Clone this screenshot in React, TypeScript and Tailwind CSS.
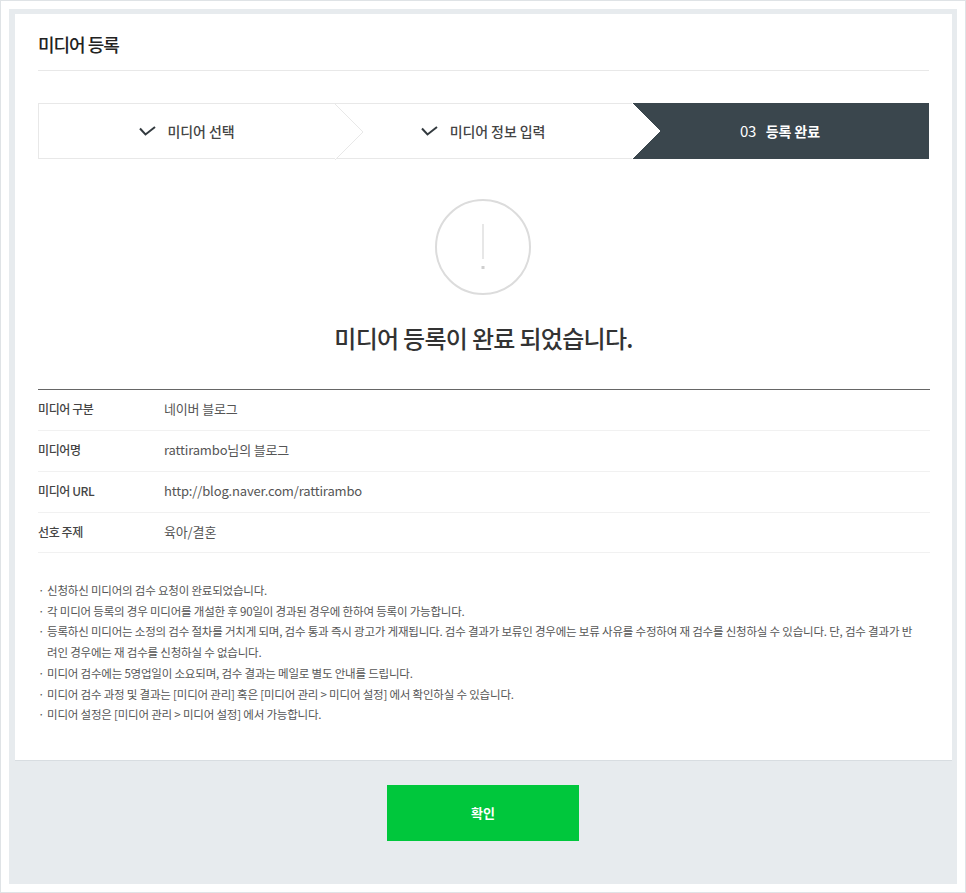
const rows = [
  { label: '미디어 구분', value: '네이버 블로그' },
  { label: '미디어명', value: 'rattirambo님의 블로그' },
  { label: '미디어 URL', value: 'http://blog.naver.com/rattirambo' },
  { label: '선호 주제', value: '육아/결혼' },
]

const notes = [
  '신청하신 미디어의 검수 요청이 완료되었습니다.',
  '각 미디어 등록의 경우 미디어를 개설한 후 90일이 경과된 경우에 한하여 등록이 가능합니다.',
  '등록하신 미디어는 소정의 검수 절차를 거치게 되며, 검수 통과 즉시 광고가 게재됩니다. 검수 결과가 보류인 경우에는 보류 사유를 수정하여 재 검수를 신청하실 수 있습니다. 단, 검수 결과가 반려인 경우에는 재 검수를 신청하실 수 없습니다.',
  '미디어 검수에는 5영업일이 소요되며, 검수 결과는 메일로 별도 안내를 드립니다.',
  '미디어 검수 과정 및 결과는 [미디어 관리] 혹은 [미디어 관리 > 미디어 설정] 에서 확인하실 수 있습니다.',
  '미디어 설정은 [미디어 관리 > 미디어 설정] 에서 가능합니다.',
]

function CheckMark() {
  return (
    <svg width="17" height="11" viewBox="0 0 17 11" fill="none" className="shrink-0">
      <path d="M1 2.5 L6.5 8.5 L16 1" stroke="#333a3f" strokeWidth="2" />
    </svg>
  )
}

function StepDone({ label }: { label: string }) {
  return (
    <div className="flex items-center justify-center gap-[12px] pr-px text-[14px] font-medium tracking-[-0.1px] text-[#444]">
      <CheckMark />
      <span>{label}</span>
    </div>
  )
}

function Arrow({ fill, stroke }: { fill: string; stroke: string }) {
  return (
    <svg width="29" height="56" viewBox="0 0 29 56" className="absolute left-0 top-0">
      <path d="M0 0 L28 28 L0 56 Z" fill={fill} />
      <path d="M0 0 L28 28 L0 56" fill="none" stroke={stroke} />
    </svg>
  )
}

export default function App() {
  return (
    <div className="h-[893px] w-[966px] bg-white font-['Noto_Sans_CJK_KR','Noto_Sans',sans-serif]">
      <div className="h-[893px] w-[966px] border border-[#dfe3e6] pb-[7px] pl-[8px] pr-[8px] pt-[8px]">
        <div className="flex h-[875px] flex-col bg-[#e7ebee] pl-[6px] pr-[5px] pt-[5px]">
          <div className="h-[747px] border-b border-[#d8dde1] bg-white px-[23px]">
            <div className="flex h-[57px] items-center border-b border-[#e8e8e8] pt-[4px] text-[18px] font-medium tracking-[-1px] text-[#222]">
              미디어 등록
            </div>

            {/* Steps */}
            <div className="mt-[32px] flex h-[56px] w-[891px] border-y border-l border-[#e8e8e8]">
              <div className="flex w-[296px] items-center justify-center">
                <StepDone label="미디어 선택" />
              </div>
              <div className="relative flex w-[297px] items-center justify-center">
                <Arrow fill="#ffffff" stroke="#e8e8e8" />
                <StepDone label="미디어 정보 입력" />
              </div>
              <div className="relative -my-px flex h-[56px] w-[297px] items-center justify-center gap-[10px] bg-[#3a464d] pr-px text-white">
                <Arrow fill="#ffffff" stroke="#ffffff" />
                <span className="text-[15px] tracking-[-0.5px]">03</span>
                <span className="text-[14px] font-bold tracking-[-0.1px]">등록 완료</span>
              </div>
            </div>

            {/* Result */}
            <div className="mt-[40px] flex justify-center pr-px">
              <svg width="96" height="96" viewBox="0 0 96 96" fill="none">
                <circle cx="48" cy="48" r="47" stroke="#dcdcdc" strokeWidth="2" />
                <path d="M48 25 V60" stroke="#cfcfcf" strokeWidth="1" />
                <rect x="46.5" y="67" width="3" height="3" fill="#cfcfcf" />
              </svg>
            </div>
            <h1 className="mt-[25px] text-center text-[24px] font-medium leading-[36px] tracking-[-0.7px] text-[#333]">
              미디어 등록이 완료 되었습니다.
            </h1>

            {/* Media info */}
            <div className="mt-[33px] w-[892px] border-t border-[#666]">
              {rows.map((row) => (
                <div key={row.label} className="flex h-[41px] items-center border-b border-[#f1f1f1] pb-[2px] last:h-[40px]">
                  <div className="w-[126px] text-[12px] font-medium tracking-[-0.4px] text-[#444]">{row.label}</div>
                  <div className="text-[13px] tracking-[-0.15px] text-[#555]">{row.value}</div>
                </div>
              ))}
            </div>

            {/* Notes */}
            <ul className="mt-[27px] w-[880px] text-[11.5px] leading-[20.7px] tracking-[-0.2px] text-[#555]">
              {notes.map((note) => (
                <li key={note} className="flex">
                  <span className="w-[9px] shrink-0">·</span>
                  <span>{note}</span>
                </li>
              ))}
            </ul>
          </div>

          <div className="flex justify-center pt-[24px]">
            <button className="ml-[-1px] h-[56px] w-[192px] bg-[#00c73c] text-[13px] font-bold text-white">확인</button>
          </div>
        </div>
      </div>
    </div>
  )
}
